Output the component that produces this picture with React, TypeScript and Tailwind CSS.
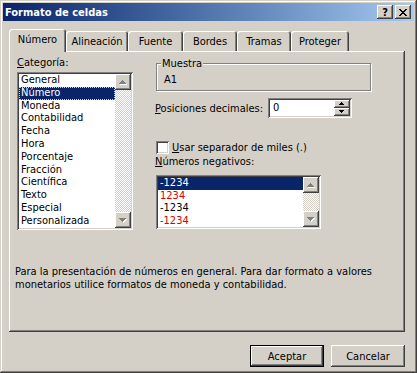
import React from 'react';

const FONT = "font-['DejaVu_Sans_Condensed','Liberation_Sans',sans-serif]";
const RAISED =
  'shadow-[inset_-1px_-1px_0_#404040,inset_1px_1px_0_#ffffff,inset_-2px_-2px_0_#808080,inset_2px_2px_0_#d4d0c8]';
const SUNKEN =
  'shadow-[inset_1px_1px_0_#808080,inset_-1px_-1px_0_#ffffff,inset_2px_2px_0_#404040,inset_-2px_-2px_0_#d4d0c8]';
const DITHER = 'bg-[repeating-conic-gradient(#ffffff_0_25%,#d4d0c8_0_50%)] bg-size-[2px_2px]';

const CATEGORIES = [
  'General',
  'Número',
  'Moneda',
  'Contabilidad',
  'Fecha',
  'Hora',
  'Porcentaje',
  'Fracción',
  'Científica',
  'Texto',
  'Especial',
  'Personalizada',
];

const NEGATIVES = [
  { text: '-1234', red: false },
  { text: '1234', red: true },
  { text: '-1234', red: false },
  { text: '-1234', red: true },
];

const Arrow = ({ dir, disabled, small }: { dir: 'up' | 'down'; disabled?: boolean; small?: boolean }) => {
  const rows = small ? [1, 3, 5] : [1, 3, 5, 7];
  const w = rows[rows.length - 1];
  const h = rows.length;
  const shape = (fill: string, dx: number, dy: number) =>
    rows.map((len, i) => {
      const y = dir === 'up' ? i : h - 1 - i;
      return <rect key={fill + i} x={(w - len) / 2 + dx} y={y + dy} width={len} height={1} fill={fill} />;
    });
  return (
    <svg width={w + 1} height={h + 1} viewBox={`0 0 ${w + 1} ${h + 1}`} shapeRendering="crispEdges">
      {disabled && shape('#ffffff', 1, 1)}
      {shape(disabled ? '#808080' : '#000000', 0, 0)}
    </svg>
  );
};

const ScrollButton = ({ dir }: { dir: 'up' | 'down' }) => (
  <div className={`w-[16px] h-[16px] bg-[#d4d0c8] ${RAISED} flex items-center justify-center shrink-0`}>
    <Arrow dir={dir} disabled />
  </div>
);

const ScrollBar = () => (
  <div className="w-[16px] h-full flex flex-col shrink-0">
    <ScrollButton dir="up" />
    <div className={`flex-1 ${DITHER}`} />
    <ScrollButton dir="down" />
  </div>
);

const Tab = ({ label, width, active }: { label: string; width: string; active?: boolean }) => (
  <div
    className={`${width} ${
      active ? 'h-[23px] -mb-[1px] pb-[2px]' : 'h-[20px]'
    } bg-[#d4d0c8] rounded-t-[3px] flex items-center justify-center shadow-[inset_1px_1px_0_#ffffff,inset_-1px_0_0_#404040,inset_-2px_0_0_#808080]`}
  >
    {label}
  </div>
);

const TitleBar = () => (
  <div className="h-[18px] flex items-center pl-[2px] pr-[3px] bg-linear-to-r from-[#0a246a] to-[#a6caf0]">
    <span className="font-bold text-white text-[11px]">Formato de celdas</span>
    <div className="ml-auto flex gap-[2px]">
      <div className={`w-[16px] h-[14px] bg-[#d4d0c8] ${RAISED} flex items-center justify-center font-bold text-[11px] leading-none`}>
        ?
      </div>
      <div className={`w-[16px] h-[14px] bg-[#d4d0c8] ${RAISED} flex items-center justify-center`}>
        <svg width="8" height="7" viewBox="0 0 8 7" shapeRendering="crispEdges">
          <path d="M0 0h2v1h-2zM6 0h2v1h-2zM1 1h2v1h-2zM5 1h2v1h-2zM2 2h4v1h-4zM3 3h2v1h-2zM2 4h4v1h-4zM1 5h2v1h-2zM5 5h2v1h-2zM0 6h2v1h-2zM6 6h2v1h-2z" fill="#000" />
        </svg>
      </div>
    </div>
  </div>
);

const NumberTab = () => (
  <div className="w-[396px] h-[281px] ml-[6px] flex flex-col shadow-[inset_-1px_-1px_0_#404040,inset_1px_1px_0_#ffffff,inset_-2px_-2px_0_#808080]">
    <div className="flex pl-[8px] pt-[5px]">
      {/* Categoría */}
      <div className="flex flex-col">
        <div className="h-[13px]">
          <u>C</u>ategoría:
        </div>
        <div className={`mt-[3px] w-[116px] h-[158px] bg-white ${SUNKEN} p-[2px] flex`}>
          <div className="flex-1 overflow-hidden">
            {CATEGORIES.map((c) => (
              <div
                key={c}
                className={`h-[12.8px] leading-[12.8px] pl-[2px] whitespace-nowrap ${
                  c === 'Número'
                    ? 'bg-[#0a246a] text-white outline-1 outline-dotted outline-[#d4d0c8] -outline-offset-1'
                    : ''
                }`}
              >
                {c}
              </div>
            ))}
          </div>
          <ScrollBar />
        </div>
      </div>

      {/* Right side */}
      <div className="ml-[22px] w-[216px] flex flex-col">
        <fieldset className="mt-[1px] ml-[1px] w-[215px] border border-[#808080] shadow-[inset_1px_1px_0_#ffffff,1px_1px_0_#ffffff] pt-[3px] pb-[4px]">
          <legend className="ml-[4px] px-[1px] bg-[#d4d0c8] leading-[13px]">Muestra</legend>
          <div className="h-[13px] pl-[7px]">A1</div>
        </fieldset>

        <div className="mt-[7px] h-[20px] flex items-center">
          <div className="w-[113px] whitespace-nowrap">
            <u>P</u>osiciones decimales:
          </div>
          <div className={`w-[84px] h-[20px] bg-white ${SUNKEN} p-[2px] flex`}>
            <div className="flex-1 pl-[3px] leading-[16px]">0</div>
            <div className="w-[16px] flex flex-col">
              <div className={`h-[8px] bg-[#d4d0c8] ${RAISED} flex items-center justify-center`}>
                <Arrow dir="up" small />
              </div>
              <div className={`h-[8px] bg-[#d4d0c8] ${RAISED} flex items-center justify-center`}>
                <Arrow dir="down" small />
              </div>
            </div>
          </div>
        </div>

        <div className="mt-[23px] h-[13px] flex items-center">
          <div className={`ml-[1px] w-[13px] h-[13px] bg-white ${SUNKEN}`} />
          <div className="ml-[3px] whitespace-nowrap">
            <u>U</u>sar separador de miles (.)
          </div>
        </div>

        <div className="mt-[1px] h-[13px] whitespace-nowrap">
          <u>N</u>úmeros negativos:
        </div>

        <div className={`mt-[7px] ml-[1px] w-[165px] h-[54px] bg-white ${SUNKEN} p-[2px] flex`}>
          <div className="flex-1 overflow-hidden">
            {NEGATIVES.map((n, i) => (
              <div
                key={i}
                className={`h-[12.5px] leading-[12.5px] pl-[2px] ${
                  i === 0 ? 'bg-[#0a246a] text-white' : n.red ? 'text-[#d80000]' : ''
                }`}
              >
                {n.text}
              </div>
            ))}
          </div>
          <ScrollBar />
        </div>
      </div>
    </div>

    <p className="mt-[35px] pl-[6px]">
      Para la presentación de números en general. Para dar formato a valores
      <br />
      monetarios utilice formatos de moneda y contabilidad.
    </p>
  </div>
);

export default function App() {
  return (
    <div
      className={`${FONT} w-[417px] h-[373px] bg-[#d4d0c8] p-[3px] flex flex-col text-[11px] leading-[13px] text-black shadow-[inset_-1px_-1px_0_#404040,inset_1px_1px_0_#d4d0c8,inset_-2px_-2px_0_#808080,inset_2px_2px_0_#ffffff]`}
    >
      <TitleBar />

      {/* Tabs */}
      <div className="relative z-10 mt-[8px] ml-[6px] h-[22px] flex items-end">
        <Tab label="Número" width="w-[57px]" active />
        <Tab label="Alineación" width="w-[62px]" />
        <Tab label="Fuente" width="w-[55px]" />
        <Tab label="Bordes" width="w-[54px]" />
        <Tab label="Tramas" width="w-[54px]" />
        <Tab label="Proteger" width="w-[58px]" />
      </div>

      <NumberTab />

      {/* Buttons */}
      <div className="mt-[13px] pr-[9px] flex justify-end gap-[7px]">
        <button className="w-[74px] h-[22px] border border-black bg-[#d4d0c8] shadow-[inset_-1px_-1px_0_#404040,inset_1px_1px_0_#ffffff,inset_-2px_-2px_0_#808080]">
          Aceptar
        </button>
        <button className={`w-[74px] h-[22px] bg-[#d4d0c8] ${RAISED}`}>Cancelar</button>
      </div>
    </div>
  );
}
